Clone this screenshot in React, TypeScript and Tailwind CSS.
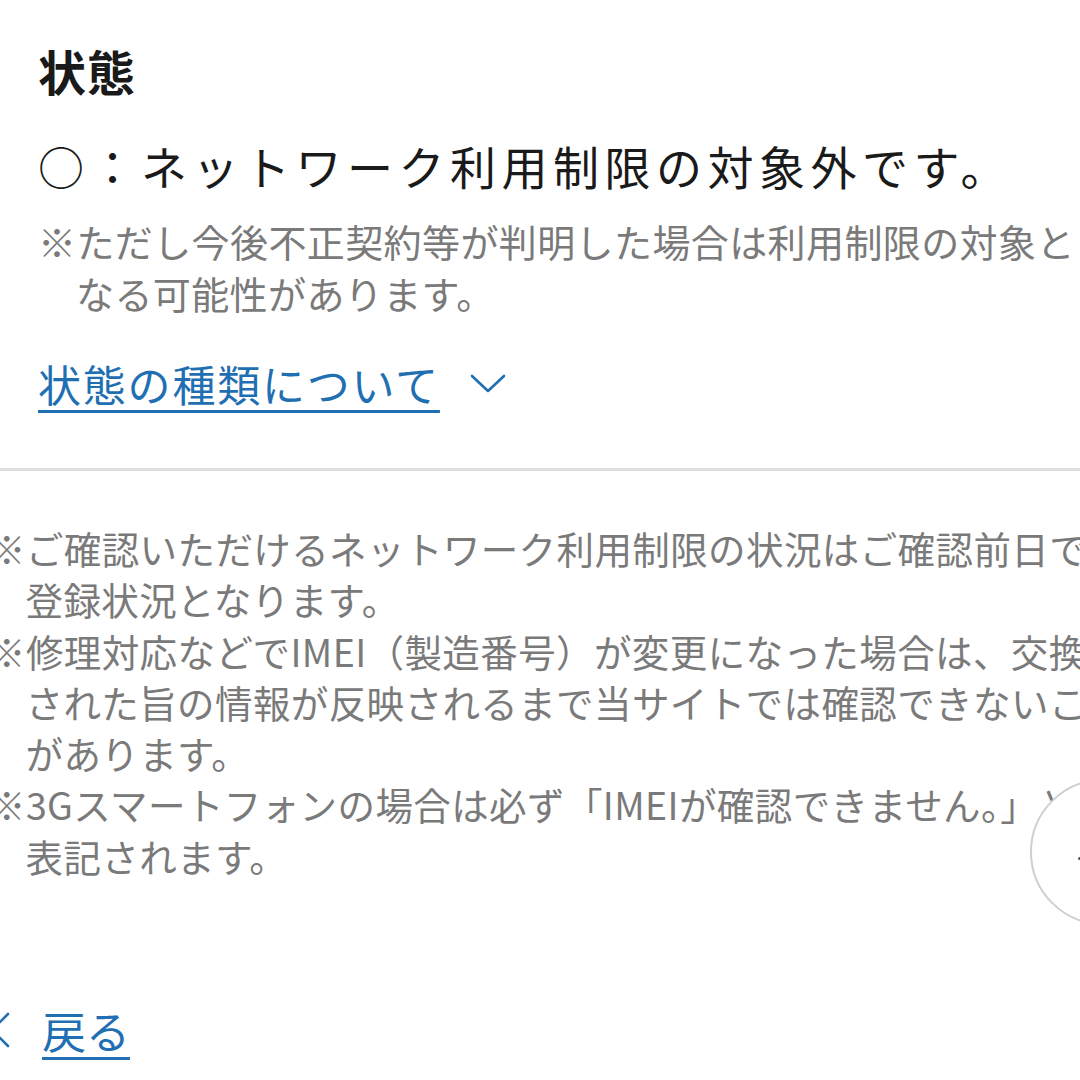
import type { ReactNode } from 'react';

const FONT = '"Noto Sans CJK JP", "Noto Sans", sans-serif';

// One hanging-indent line: continuation lines get a full-width space indent
function NoteLine({ children, indent = false }: { children: ReactNode; indent?: boolean }) {
    return (
        <div className="whitespace-nowrap" style={{ paddingLeft: indent ? '1em' : 0 }}>
            {children}
        </div>
    );
}

function ChevronDown() {
    return (
        <svg width="36" height="20" viewBox="0 0 36 20" fill="none" className="ml-[30px] mt-[2px]">
            <path d="M2 2 L18 17 L34 2" stroke="#1f6fb2" strokeWidth="2.6" strokeLinecap="round" strokeLinejoin="round" />
        </svg>
    );
}

export default function App() {
    return (
        <div className="relative w-[1080px] h-[1080px] overflow-hidden bg-white" style={{ fontFamily: FONT }}>
            {/* Status block */}
            <div className="px-[38px] pt-[40px]">
                <h2 className="text-[48px] leading-[60px] font-bold text-[#1a1a1a] tracking-[1px]">状態</h2>
                <p className="mt-[35px] text-[46px] leading-[60px] text-[#1a1a1a] tracking-[5.5px] whitespace-nowrap">
                    ○：ネットワーク利用制限の対象外です。
                </p>
                <div className="mt-[20px] text-[38px] leading-[52px] text-[#7a7a7a] tracking-[0.4px]">
                    <NoteLine>※ただし今後不正契約等が判明した場合は利用制限の対象と</NoteLine>
                    <NoteLine indent>なる可能性があります。</NoteLine>
                </div>
                <div className="mt-[34px] flex items-center h-[60px]">
                    <a className="text-[43px] leading-[60px] text-[#1f6fb2] underline decoration-[3px] underline-offset-[8px] tracking-[1.8px] whitespace-nowrap">
                        状態の種類について
                    </a>
                    <ChevronDown />
                </div>
            </div>

            <div className="mt-[55px] h-[3px] bg-[#dedede]" />

            {/* Notes (wider than the viewport, cut on both sides) */}
            <div className="mt-[51px] ml-[-12px] text-[37.5px] leading-[51.3px] text-[#7a7a7a] tracking-[0.4px]">
                <NoteLine>※ご確認いただけるネットワーク利用制限の状況はご確認前日での</NoteLine>
                <NoteLine indent>登録状況となります。</NoteLine>
                <NoteLine>※修理対応などでIMEI（製造番号）が変更になった場合は、交換</NoteLine>
                <NoteLine indent>された旨の情報が反映されるまで当サイトでは確認できないこと</NoteLine>
                <NoteLine indent>があります。</NoteLine>
                <NoteLine>※3Gスマートフォンの場合は必ず「IMEIが確認できません。」と</NoteLine>
                <NoteLine indent>表記されます。</NoteLine>
            </div>

            {/* Back link */}
            <div className="mt-[119px] flex items-center h-[60px] ml-[-22px]">
                <svg width="34" height="36" viewBox="0 0 34 36" fill="none">
                    <path d="M30 2 L14 18 L30 34" stroke="#1f6fb2" strokeWidth="2.6" strokeLinecap="round" strokeLinejoin="round" />
                </svg>
                <a className="ml-[30px] text-[44px] leading-[60px] text-[#1f6fb2] underline decoration-[3px] underline-offset-[8px]">
                    戻る
                </a>
            </div>

            {/* Floating round button, cut off at the right edge */}
            <div className="absolute left-[1030px] top-[779px] w-[146px] h-[146px] rounded-full border-2 border-[#cfcfcf] bg-white">
                <div className="absolute left-[46px] top-[76px] w-[3px] h-[3px] rounded-full bg-[#555]" />
            </div>
        </div>
    );
}
